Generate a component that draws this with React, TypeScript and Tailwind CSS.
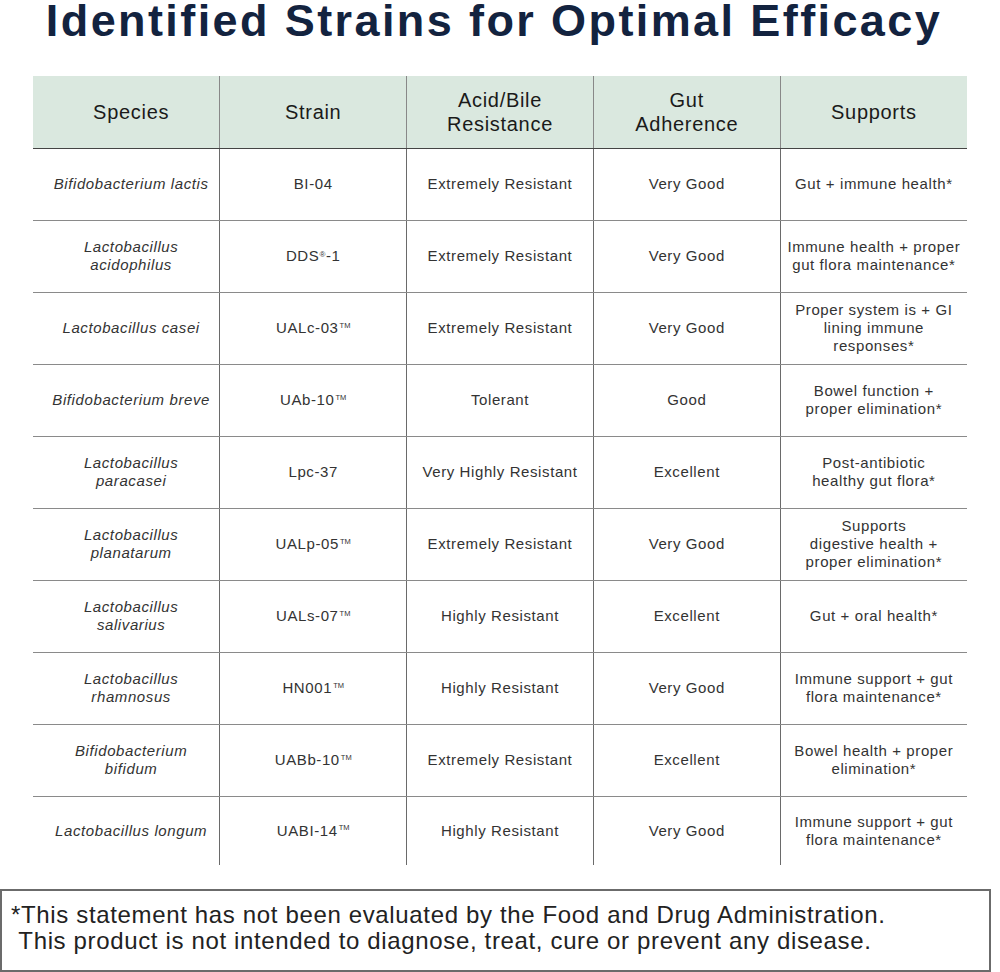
import React from "react";

type Row = {
  species: string[];
  strain: React.ReactNode;
  acid: string;
  gut: string;
  supports: string[];
};

const TM = () => <sup className="text-[7.5px] ml-[1px] -top-[5.5px] tracking-normal">TM</sup>;

const rows: Row[] = [
  { species: ["Bifidobacterium lactis"], strain: "BI-04", acid: "Extremely Resistant", gut: "Very Good", supports: ["Gut + immune health*"] },
  {
    species: ["Lactobacillus", "acidophilus"],
    strain: (
      <>
        DDS<sup className="text-[8px]">®</sup>-1
      </>
    ),
    acid: "Extremely Resistant",
    gut: "Very Good",
    supports: ["Immune health + proper", "gut flora maintenance*"],
  },
  { species: ["Lactobacillus casei"], strain: <>UALc-03<TM /></>, acid: "Extremely Resistant", gut: "Very Good", supports: ["Proper system is + GI", "lining immune", "responses*"] },
  { species: ["Bifidobacterium breve"], strain: <>UAb-10<TM /></>, acid: "Tolerant", gut: "Good", supports: ["Bowel function +", "proper elimination*"] },
  { species: ["Lactobacillus", "paracasei"], strain: "Lpc-37", acid: "Very Highly Resistant", gut: "Excellent", supports: ["Post-antibiotic", "healthy gut flora*"] },
  { species: ["Lactobacillus", "planatarum"], strain: <>UALp-05<TM /></>, acid: "Extremely Resistant", gut: "Very Good", supports: ["Supports", "digestive health +", "proper elimination*"] },
  { species: ["Lactobacillus", "salivarius"], strain: <>UALs-07<TM /></>, acid: "Highly Resistant", gut: "Excellent", supports: ["Gut + oral health*"] },
  { species: ["Lactobacillus", "rhamnosus"], strain: <>HN001<TM /></>, acid: "Highly Resistant", gut: "Very Good", supports: ["Immune support + gut", "flora maintenance*"] },
  { species: ["Bifidobacterium", "bifidum"], strain: <>UABb-10<TM /></>, acid: "Extremely Resistant", gut: "Excellent", supports: ["Bowel health + proper", "elimination*"] },
  { species: ["Lactobacillus longum"], strain: <>UABI-14<TM /></>, acid: "Highly Resistant", gut: "Very Good", supports: ["Immune support + gut", "flora maintenance*"] },
];

const headers = [["Species"], ["Strain"], ["Acid/Bile", "Resistance"], ["Gut", "Adherence"], ["Supports"]];

function Lines({ lines }: { lines: string[] }) {
  return (
    <>
      {lines.map((l, i) => (
        <div key={i}>{l}</div>
      ))}
    </>
  );
}

export default function App() {
  return (
    <div className="w-[1000px] h-[972px] bg-white font-['Liberation_Sans',Arial,sans-serif] text-[#333]">
      <h1 className="h-[76px] pr-[12px] text-center text-[45px] leading-[42px] font-bold text-[#13233f] tracking-[2.4px]">
        Identified Strains for Optimal Efficacy
      </h1>

      <table className="ml-[33px] w-[934px] table-fixed border-collapse">
        <thead>
          <tr className="h-[72px] bg-[#dae8df]">
            {headers.map((h, i) => (
              <th
                key={i}
                className={`p-0 font-normal text-[20px] leading-[24px] text-[#1a1a1a] tracking-[0.7px] border-b border-[#444] ${i > 0 ? "border-l border-l-[#888]" : "pl-[10px]"}`}
              >
                <Lines lines={h} />
              </th>
            ))}
          </tr>
        </thead>
        <tbody>
          {rows.map((r, idx) => {
            const last = idx === rows.length - 1;
            const rb = last ? "" : "border-b border-[#8a8a8a]";
            const cell = `p-0 text-center text-[15px] leading-[18px] tracking-[0.6px] ${rb}`;
            const sep = "border-l border-l-[#6a6a6a]";
            return (
              <tr key={idx} className={last ? "h-[69px]" : "h-[72px]"}>
                <td className={`${cell} italic pl-[10px]`}>
                  <Lines lines={r.species} />
                </td>
                <td className={`${cell} ${sep}`}>{r.strain}</td>
                <td className={`${cell} ${sep}`}>{r.acid}</td>
                <td className={`${cell} ${sep}`}>{r.gut}</td>
                <td className={`${cell} ${sep}`}>
                  <Lines lines={r.supports} />
                </td>
              </tr>
            );
          })}
        </tbody>
      </table>

      <div className="mt-[24px] w-[991px] h-[83px] border-2 border-[#6b6b6b] pl-[9px] pt-[11px] text-[24px] leading-[26px] text-[#222] tracking-[0.65px] whitespace-nowrap">
        <div>*This statement has not been evaluated by the Food and Drug Administration.</div>
        <div>&nbsp;This product is not intended to diagnose, treat, cure or prevent any disease.</div>
      </div>
    </div>
  );
}
